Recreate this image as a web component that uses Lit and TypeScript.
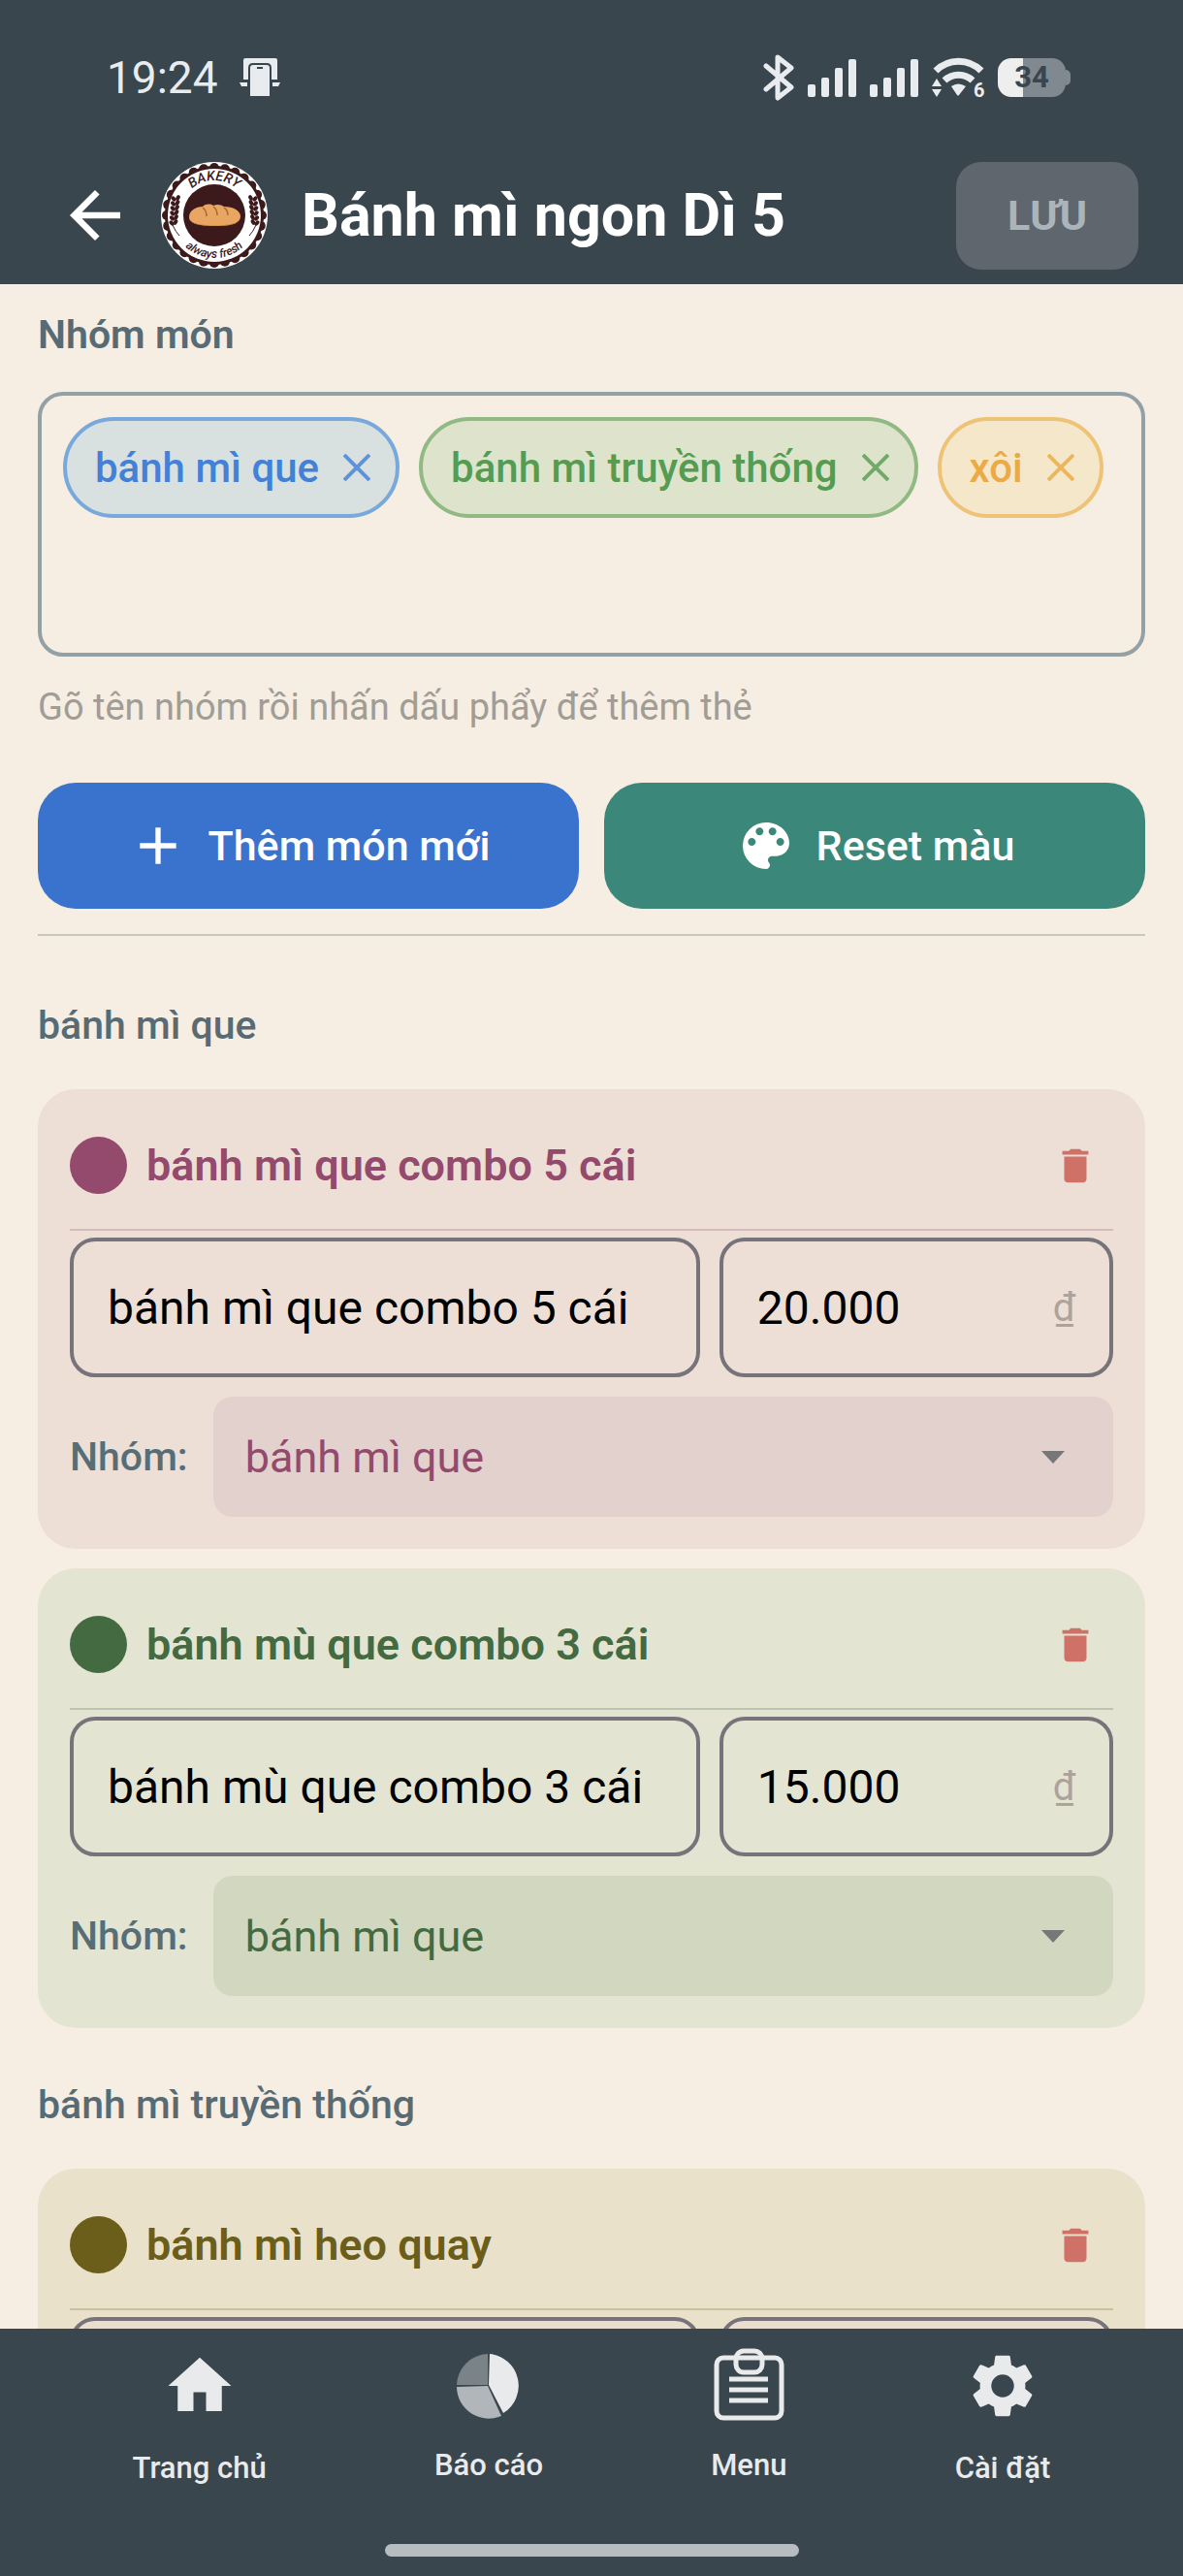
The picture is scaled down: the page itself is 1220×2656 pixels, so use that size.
/**
 * Bakery shop menu editor: group tags, item cards and bottom navigation.
 */

import { LitElement, html, css, svg } from "lit";
import { customElement, property, state } from "lit/decorators.js";
import { styleMap } from "lit/directives/style-map.js";

interface Tag {
  name: string;
  tone: string;
}

interface MenuItem {
  name: string;
  price: string;
  accent: string;
  card: string;
  select: string;
  field: string;
}

interface Group {
  name: string;
  items: MenuItem[];
}

const TAGS: Tag[] = [
  { name: "bánh mì que", tone: "blue" },
  { name: "bánh mì truyền thống", tone: "green" },
  { name: "xôi", tone: "orange" },
];

const GROUPS: Group[] = [
  {
    name: "bánh mì que",
    items: [
      {
        name: "bánh mì que combo 5 cái",
        price: "20.000",
        accent: "#934a6d",
        card: "#eddfd5",
        select: "#e2d1cd",
        field: "#eddfd5",
      },
      {
        name: "bánh mù que combo 3 cái",
        price: "15.000",
        accent: "#446a41",
        card: "#e4e4d2",
        select: "#d2d7c0",
        field: "#e4e4d2",
      },
    ],
  },
  {
    name: "bánh mì truyền thống",
    items: [
      {
        name: "bánh mì heo quay",
        price: "25.000",
        accent: "#6b5d1a",
        card: "#e9e1ca",
        select: "#dcd3b4",
        field: "#eadfce",
      },
    ],
  },
];

/** Round shop badge with a loaf in the middle. */
const SCALLOPS = Array.from({ length: 28 }, (_, i) => (i * Math.PI) / 14);
const LEAVES = [0, 1, 2, 3, 4, 5];

const wheat = svg`
  ${LEAVES.map(
    (i) => svg`
      <ellipse cx=${11 + i * 0.4} cy=${63 - i * 5} rx="3" ry="2" transform="rotate(50 ${11 + i * 0.4} ${63 - i * 5})" />
      <ellipse cx=${15 + i * 0.5} cy=${62 - i * 5} rx="3" ry="2" transform="rotate(-60 ${15 + i * 0.5} ${62 - i * 5})" />
    `
  )}
  <path d="M12 65q3 7 7 11" fill="none" stroke="#3c1a1b" stroke-width="1" />
`;

const logo = html`
  <svg class="logo" viewBox="0 0 110 110" aria-hidden="true">
    <circle cx="55" cy="55" r="55" fill="#fff" />
    <g fill="#3c1a1b">
      <circle cx="55" cy="55" r="51" />
      ${SCALLOPS.map(
        (a) => svg`<circle cx=${55 + 49 * Math.cos(a)} cy=${55 + 49 * Math.sin(a)} r="5" />`
      )}
    </g>
    <circle cx="55" cy="55" r="48" fill="#fff" />
    <circle cx="55" cy="55" r="32" fill="#3c1a1b" />
    <g fill="#3c1a1b">
      ${wheat}
      <g transform="translate(110 0) scale(-1 1)">${wheat}</g>
    </g>
    <path
      d="M29 57c0-7 7-11 14-11 3-3 8-3 11-1 4-2 8-1 11 1 9 0 17 4 17 10 0 8-12 10-26 10s-27-2-27-9z"
      fill="#e8a662"
    />
    <path d="M31 61c8 6 40 6 49 0-3 4-12 5-24 5s-22-1-25-5z" fill="#c98238" />
    <path d="M43 47c3 2 4 5 4 9M54 46c3 2 4 5 4 9M65 47c3 2 4 5 4 8" fill="none" stroke="#a8652c" stroke-width="1.5" />
    <path id="arc-top" d="M19 55a36 36 0 0 1 72 0" fill="none" />
    <path id="arc-bottom" d="M11 55a44 44 0 0 0 88 0" fill="none" />
    <g class="logo-text" text-anchor="middle">
      <text class="logo-name"><textPath href="#arc-top" startOffset="50%">BAKERY</textPath></text>
      <text class="logo-sub"><textPath href="#arc-bottom" startOffset="50%">always fresh</textPath></text>
    </g>
  </svg>
`;

const signalBars = html`
  <svg class="signal" viewBox="0 0 50 40" aria-hidden="true">
    <rect x="0" y="27" width="8" height="13" rx="2" />
    <rect x="14" y="20" width="8" height="20" rx="2" />
    <rect x="28" y="10" width="8" height="30" rx="2" />
    <rect x="42" y="1" width="8" height="39" rx="2" />
  </svg>
`;

const statusIcons = html`
  <svg class="bluetooth" viewBox="0 0 32 48" aria-hidden="true">
    <path
      d="M3 12l26 22-14 11V3l14 11L3 36"
      fill="none"
      stroke="currentColor"
      stroke-width="5"
      stroke-linecap="round"
      stroke-linejoin="round"
    />
  </svg>
  ${signalBars} ${signalBars}
  <svg class="wifi" viewBox="0 0 54 42" aria-hidden="true">
    <g fill="none" stroke="currentColor" stroke-width="7">
      <path d="M4 14a33 33 0 0 1 47 0" />
      <path d="M13 24a21 21 0 0 1 29 0" />
    </g>
    <path d="M20 30q7-5 15 0l-7 9q-1 1-2 0zM0 30l5-8 5 8zM0 33l5 8 5-8z" />
    <text x="43" y="41" class="wifi-gen">6</text>
  </svg>
`;

const icons = {
  back: html`<svg viewBox="0 0 24 24" aria-hidden="true"><path d="M20 11H7.83l5.59-5.59L12 4l-8 8 8 8 1.41-1.41L7.83 13H20z" /></svg>`,
  close: html`<svg viewBox="0 0 28 28" aria-hidden="true"><path d="M1 1l26 26M27 1L1 27" fill="none" stroke="currentColor" stroke-width="4" /></svg>`,
  add: html`<svg viewBox="0 0 24 24" aria-hidden="true"><path d="M19 13h-6v6h-2v-6H5v-2h6V5h2v6h6z" /></svg>`,
  palette: html`<svg viewBox="0 0 24 24" aria-hidden="true"><path d="M12 3a9 9 0 0 0 0 18c.83 0 1.5-.67 1.5-1.5 0-.39-.15-.74-.39-1.01-.23-.26-.38-.61-.38-.99 0-.83.67-1.5 1.5-1.5H16c2.76 0 5-2.24 5-5 0-4.42-4.03-8-9-8zm-5.5 9c-.83 0-1.5-.67-1.5-1.5S5.67 9 6.5 9 8 9.67 8 10.5 7.33 12 6.5 12zm3-4C8.67 8 8 7.33 8 6.5S8.67 5 9.5 5s1.5.67 1.5 1.5S10.33 8 9.5 8zm5 0c-.83 0-1.5-.67-1.5-1.5S13.67 5 14.5 5s1.5.67 1.5 1.5S15.33 8 14.5 8zm3 4c-.83 0-1.5-.67-1.5-1.5S16.67 9 17.5 9s1.5.67 1.5 1.5-.67 1.5-1.5 1.5z" /></svg>`,
  trash: html`<svg viewBox="0 0 24 24" aria-hidden="true"><path d="M6 19c0 1.1.9 2 2 2h8c1.1 0 2-.9 2-2V7H6zM19 4h-3.5l-1-1h-5l-1 1H5v2h14z" /></svg>`,
  home: html`<svg viewBox="0 0 24 24" aria-hidden="true"><path d="M10 20v-6h4v6h5v-8h3L12 3 2 12h3v8z" /></svg>`,
  report: html`
    <svg class="short" viewBox="0 0 78 75" aria-hidden="true">
      <path d="M40 6a33 33 0 0 1 14 61L39 38z" />
      <path d="M38 39L52 70A33 33 0 0 1 6 40z" fill="#b0b6ba" />
      <path d="M38 6v32L6 38A33 33 0 0 1 38 6z" fill="#7a8388" />
    </svg>
  `,
  menu: html`
    <svg class="short" viewBox="0 0 78 75" aria-hidden="true">
      <g fill="none" stroke="currentColor" stroke-width="5">
        <rect x="6" y="10" width="67" height="62" rx="7" />
        <rect x="26" y="3" width="27" height="22" rx="8" />
        <path d="M19 32h40M19 43h40M19 54h40" />
      </g>
    </svg>
  `,
  settings: html`<svg viewBox="0 0 24 24" aria-hidden="true"><path d="M19.14 12.94c.04-.3.06-.61.06-.94 0-.32-.02-.64-.07-.94l2.03-1.58c.18-.14.23-.41.12-.61l-1.92-3.32c-.12-.22-.37-.29-.59-.22l-2.39.96c-.5-.38-1.03-.7-1.62-.94l-.36-2.54c-.04-.24-.24-.41-.48-.41h-3.84c-.24 0-.43.17-.47.41l-.36 2.54c-.59.24-1.13.57-1.62.94l-2.39-.96c-.22-.08-.47 0-.59.22L2.74 8.87c-.12.21-.08.47.12.61l2.03 1.58c-.05.3-.09.63-.09.94s.02.64.07.94l-2.03 1.58c-.18.14-.23.41-.12.61l1.92 3.32c.12.22.37.29.59.22l2.39-.96c.5.38 1.03.7 1.62.94l.36 2.54c.05.24.24.41.48.41h3.84c.24 0 .44-.17.47-.41l.36-2.54c.59-.24 1.13-.56 1.62-.94l2.39.96c.22.08.47 0 .59-.22l1.92-3.32c.12-.22.07-.47-.12-.61zM12 15.6A3.6 3.6 0 1 1 12 8.4a3.6 3.6 0 0 1 0 7.2z" /></svg>`,
};

@customElement("menu-item-card")
export class MenuItemCard extends LitElement {
  @property({ attribute: false }) item!: MenuItem;
  @property({ attribute: false }) group = "";
  @property({ attribute: false }) groups: string[] = [];

  static styles = css`
    * {
      box-sizing: border-box;
    }

    :host {
      display: block;
    }

    .card {
      display: flex;
      flex-direction: column;
      padding: 33px;
      border-radius: 39px;
      background: var(--card);
    }

    .head {
      display: flex;
      align-items: center;
      gap: 20px;
      padding-bottom: 20px;
      border-bottom: 2px solid color-mix(in srgb, var(--accent) 25%, var(--card));
    }

    .dot {
      width: 59px;
      height: 59px;
      border-radius: 50%;
      background: var(--accent);
    }

    h3 {
      flex: 1;
      margin: 0;
      font-size: 45px;
      font-weight: 600;
      line-height: 91px;
      color: var(--accent);
    }

    button {
      display: flex;
      align-items: center;
      justify-content: center;
      width: 78px;
      height: 78px;
      padding: 0;
      border: 0;
      background: none;
      color: #d07168;
    }

    button svg {
      width: 46px;
      height: 46px;
      fill: currentColor;
    }

    .fields {
      display: grid;
      grid-template-columns: minmax(0, 8fr) minmax(0, 5fr);
      gap: 20px;
      margin-top: 7px;
    }

    .field {
      display: flex;
      align-items: center;
      min-width: 0;
      height: 144px;
      padding: 0 35px;
      border: 4px solid #77737b;
      border-radius: 26px;
      background: var(--field);
    }

    input {
      flex: 1;
      width: 100%;
      min-width: 0;
      padding: 0;
      border: 0;
      outline: 0;
      background: none;
      font-family: inherit;
      font-size: 48px;
      color: #000;
    }

    .unit {
      font-size: 40px;
      color: #aca39c;
    }

    .group {
      display: flex;
      align-items: center;
      gap: 26px;
      margin-top: 20px;
    }

    label {
      font-size: 41px;
      font-weight: 500;
      color: #586d76;
    }

    .select {
      flex: 1;
      display: grid;
      align-items: center;
    }

    .select > * {
      grid-area: 1 / 1;
    }

    select {
      appearance: none;
      width: 100%;
      height: 124px;
      padding: 0 33px;
      border: 0;
      border-radius: 20px;
      background: var(--select);
      font-family: inherit;
      font-size: 45px;
      color: var(--accent);
    }

    .select svg {
      justify-self: end;
      width: 24px;
      height: 13px;
      margin-right: 50px;
      fill: #777;
      pointer-events: none;
    }
  `;

  render() {
    const { name, price, accent, card, select, field } = this.item;
    const colors = {
      "--accent": accent,
      "--card": card,
      "--select": select,
      "--field": field,
    };

    return html`
      <article class="card" style=${styleMap(colors)}>
        <div class="head">
          <span class="dot"></span>
          <h3>${name}</h3>
          <button aria-label="Xóa ${name}">${icons.trash}</button>
        </div>
        <div class="fields">
          <div class="field">
            <input aria-label="Tên món" .value=${name} />
          </div>
          <div class="field">
            <input aria-label="Giá" inputmode="numeric" .value=${price} />
            <span class="unit">₫</span>
          </div>
        </div>
        <div class="group">
          <label for="group">Nhóm:</label>
          <div class="select">
            <select id="group">
              ${this.groups.map(
                (g) => html`<option ?selected=${g === this.group}>${g}</option>`
              )}
            </select>
            <svg viewBox="0 0 24 13" aria-hidden="true"><path d="M0 0h24L12 13z" /></svg>
          </div>
        </div>
      </article>
    `;
  }
}

@customElement("app-root")
export class AppRoot extends LitElement {
  @state() private _tags: Tag[] = TAGS;

  static styles = css`
    * {
      box-sizing: border-box;
    }

    :host {
      display: flex;
      flex-direction: column;
      height: 100vh;
      background: #f6eee2;
      font-family: Roboto, "Noto Sans", sans-serif;
    }

    svg {
      fill: currentColor;
    }

    button {
      padding: 0;
      border: 0;
      background: none;
      font-family: inherit;
      color: inherit;
    }

    header {
      background: #3a464d;
      color: #fff;
    }

    .status {
      display: flex;
      align-items: center;
      gap: 14px;
      height: 151px;
      padding: 8px 116px 0 110px;
      color: #e9ecef;
    }

    .time {
      font-size: 46px;
    }

    .device {
      width: 42px;
      height: 39px;
      margin: 0 auto 0 8px;
    }

    .bluetooth {
      width: 32px;
      height: 48px;
    }

    .signal {
      width: 50px;
      height: 40px;
    }

    .wifi {
      width: 54px;
      height: 42px;
      overflow: visible;
    }

    .wifi-gen {
      font-size: 20px;
      font-weight: 700;
    }

    .battery {
      display: flex;
      align-items: center;
    }

    .battery-body {
      display: flex;
      align-items: center;
      justify-content: center;
      width: 70px;
      height: 40px;
      border-radius: 14px;
      background: linear-gradient(to right, #eee 37%, #7f898f 37%);
      font-size: 31px;
      font-weight: 700;
      color: #3a464d;
    }

    .battery-tip {
      width: 5px;
      height: 16px;
      border-radius: 0 6px 6px 0;
      background: #7f898f;
    }

    .bar {
      display: flex;
      align-items: center;
      gap: 29px;
      height: 142px;
      padding: 0 46px 0 59px;
    }

    .back,
    .back svg {
      display: block;
      width: 78px;
      height: 78px;
    }

    .logo {
      width: 110px;
      height: 110px;
      overflow: visible;
    }

    .logo-text {
      font-style: italic;
      font-weight: 500;
      fill: #3c1a1b;
    }

    .logo-name {
      font-size: 14px;
    }

    .logo-sub {
      font-size: 12px;
    }

    h1 {
      flex: 1;
      margin: 0;
      padding-left: 6px;
      font-size: 61px;
      font-weight: 700;
    }

    .save {
      width: 188px;
      height: 111px;
      border-radius: 26px;
      background: #5f666d;
      font-size: 43px;
      font-weight: 700;
      color: #abb4ba;
    }

    main {
      flex: 1;
      min-height: 0;
      padding: 29px 39px 39px;
      overflow-y: auto;
      scrollbar-width: none;
    }

    .label,
    h2 {
      display: block;
      margin: 0;
      font-size: 41px;
      font-weight: 500;
      line-height: 46px;
      color: #586b74;
    }

    .label {
      font-weight: 600;
    }

    .tags {
      display: flex;
      flex-wrap: wrap;
      align-content: flex-start;
      gap: 20px;
      min-height: 273px;
      margin-top: 36px;
      padding: 22px;
      border: 4px solid #93a0a6;
      border-radius: 26px;
    }

    .tag {
      display: flex;
      align-items: center;
      gap: 25px;
      height: 104px;
      padding: 0 26px 0 29px;
      border: 4px solid;
      border-radius: 52px;
      font-size: 42px;
      font-weight: 500;
    }

    .tag button,
    .tag svg {
      display: block;
      width: 28px;
      height: 28px;
    }

    .tag button {
      opacity: 0.8;
    }

    .tag.blue {
      border-color: #79a9dc;
      background: #d8e0e0;
      color: #4281d8;
    }

    .tag.green {
      border-color: #90b983;
      background: #dee4cc;
      color: #559c51;
    }

    .tag.orange {
      border-color: #efc377;
      background: #f5e7ca;
      color: #ebaa45;
    }

    .new-tag {
      flex: 1 1 100%;
      min-width: 0;
      padding: 0 29px;
      border: 0;
      outline: 0;
      background: none;
      font-family: inherit;
      font-size: 41px;
      color: #000;
    }

    .hint {
      margin: 29px 0 55px;
      font-size: 38px;
      line-height: 46px;
      color: #a09c96;
    }

    .actions {
      display: grid;
      grid-template-columns: 1fr 1fr;
      gap: 26px;
    }

    .action {
      display: flex;
      align-items: center;
      justify-content: center;
      gap: 20px;
      height: 130px;
      border-radius: 39px;
      font-size: 43px;
      font-weight: 500;
      color: #fff;
    }

    .action svg {
      width: 64px;
      height: 64px;
    }

    .action.add {
      background: #3a73cd;
    }

    .action.reset {
      background: #3b8779;
    }

    hr {
      height: 2px;
      margin: 26px 0 13px;
      border: 0;
      background: #cac6bb;
    }

    section {
      display: flex;
      flex-direction: column;
      gap: 20px;
      padding-top: 56px;
    }

    h2 {
      padding-bottom: 23px;
    }

    footer {
      display: flex;
      flex-direction: column;
      justify-content: space-between;
      align-items: center;
      height: 255px;
      padding: 20px 0;
      background: #3a464d;
      color: #e8eaec;
    }

    nav {
      display: flex;
      justify-content: space-around;
      align-items: flex-start;
      width: 100%;
      padding: 0 50px;
    }

    nav a {
      display: flex;
      flex-direction: column;
      align-items: center;
      gap: 28px;
      font-size: 31px;
      font-weight: 500;
      line-height: 36px;
      color: inherit;
      text-decoration: none;
    }

    nav svg {
      width: 78px;
      height: 78px;
      margin: 0 -10px;
    }

    nav svg.short {
      height: 75px;
    }

    .handle {
      width: 35%;
      height: 13px;
      border-radius: 7px;
      background: #b7bcc0;
    }
  `;

  private _removeTag(tag: Tag): void {
    this._tags = this._tags.filter((t) => t !== tag);
  }

  private _renderHeader() {
    return html`
      <header>
        <div class="status">
          <span class="time">19:24</span>
          <svg class="device" viewBox="0 0 42 39" aria-hidden="true">
            <path d="M4 2q0-2 2-2h31q2 0 2 2v20h-6V10q0-5-5-5H14q-5 0-5 5v12H4zM0 25h8v4H2zM34 25h8l-2 4h-6z" />
            <path fill-rule="evenodd" d="M11 10q0-3 3-3h14q3 0 3 3v29H11zM18 9v2h6V9z" />
          </svg>
          ${statusIcons}
          <div class="battery">
            <span class="battery-body">34</span>
            <span class="battery-tip"></span>
          </div>
        </div>
        <div class="bar">
          <button class="back" aria-label="Quay lại">${icons.back}</button>
          ${logo}
          <h1>Bánh mì ngon Dì 5</h1>
          <button class="save" disabled>LƯU</button>
        </div>
      </header>
    `;
  }

  private _renderTags() {
    return html`
      <label class="label" for="new-tag">Nhóm món</label>
      <div class="tags">
        ${this._tags.map(
          (tag) => html`
            <span class="tag ${tag.tone}">
              ${tag.name}
              <button aria-label="Xóa ${tag.name}" @click=${() => this._removeTag(tag)}>
                ${icons.close}
              </button>
            </span>
          `
        )}
        <input id="new-tag" class="new-tag" />
      </div>
      <p class="hint">Gõ tên nhóm rồi nhấn dấu phẩy để thêm thẻ</p>
    `;
  }

  render() {
    const groupNames = this._tags.map((t) => t.name);

    return html`
      ${this._renderHeader()}
      <main>
        ${this._renderTags()}
        <div class="actions">
          <button class="action add">${icons.add}Thêm món mới</button>
          <button class="action reset">${icons.palette}Reset màu</button>
        </div>
        <hr />
        ${GROUPS.map(
          (group) => html`
            <section>
              <h2>${group.name}</h2>
              ${group.items.map(
                (item) => html`
                  <menu-item-card
                    .item=${item}
                    .group=${group.name}
                    .groups=${groupNames}
                  ></menu-item-card>
                `
              )}
            </section>
          `
        )}
      </main>
      <footer>
        <nav>
          <a href="#home">${icons.home}Trang chủ</a>
          <a href="#report">${icons.report}Báo cáo</a>
          <a href="#menu">${icons.menu}Menu</a>
          <a href="#settings">${icons.settings}Cài đặt</a>
        </nav>
        <span class="handle"></span>
      </footer>
    `;
  }
}

declare global {
  interface HTMLElementTagNameMap {
    "app-root": AppRoot;
    "menu-item-card": MenuItemCard;
  }
}
